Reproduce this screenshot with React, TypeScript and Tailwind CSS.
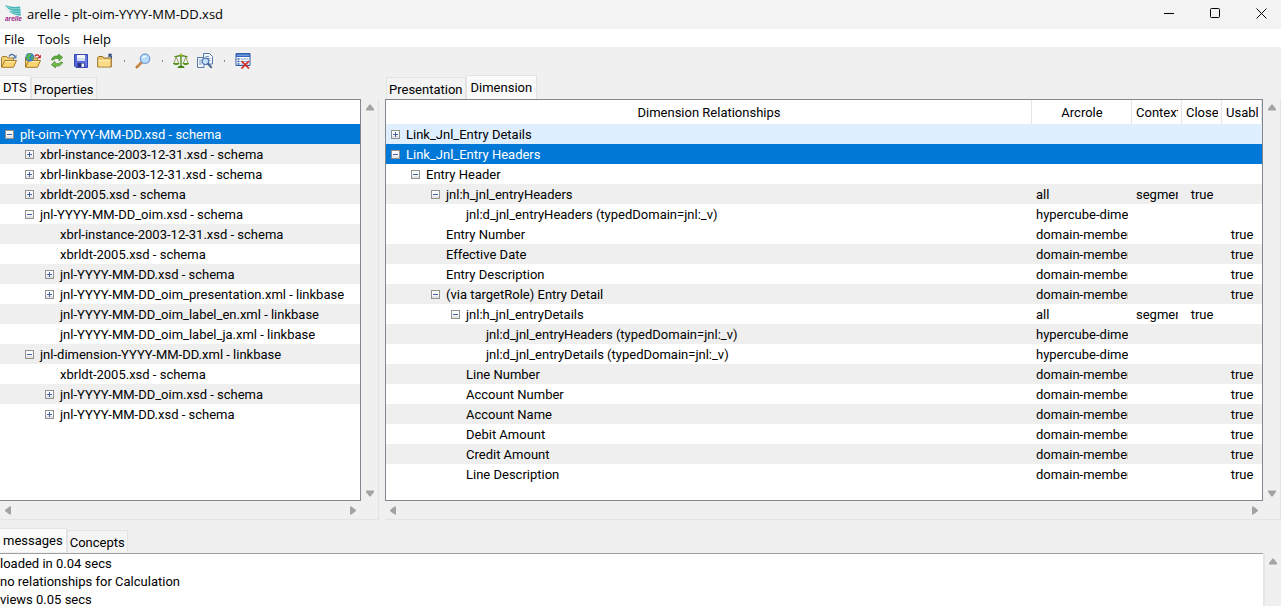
import { useState } from "react";
import type { ReactNode } from "react";

const indent = ["pl-[5px]", "pl-[25px]", "pl-[45px]", "pl-[65px]", "pl-[85px]"];

type Mark = "+" | "-" | "";
type Node = { depth: number; mark: Mark; text: string };
type Relation = Node & {
  tone: string;
  arcrole?: string;
  context?: string;
  closed?: string;
  usable?: string;
};

const dts: Node[] = [
  { depth: 0, mark: "-", text: "plt-oim-YYYY-MM-DD.xsd - schema" },
  { depth: 1, mark: "+", text: "xbrl-instance-2003-12-31.xsd - schema" },
  { depth: 1, mark: "+", text: "xbrl-linkbase-2003-12-31.xsd - schema" },
  { depth: 1, mark: "+", text: "xbrldt-2005.xsd - schema" },
  { depth: 1, mark: "-", text: "jnl-YYYY-MM-DD_oim.xsd - schema" },
  { depth: 2, mark: "", text: "xbrl-instance-2003-12-31.xsd - schema" },
  { depth: 2, mark: "", text: "xbrldt-2005.xsd - schema" },
  { depth: 2, mark: "+", text: "jnl-YYYY-MM-DD.xsd - schema" },
  { depth: 2, mark: "+", text: "jnl-YYYY-MM-DD_oim_presentation.xml - linkbase" },
  { depth: 2, mark: "", text: "jnl-YYYY-MM-DD_oim_label_en.xml - linkbase" },
  { depth: 2, mark: "", text: "jnl-YYYY-MM-DD_oim_label_ja.xml - linkbase" },
  { depth: 1, mark: "-", text: "jnl-dimension-YYYY-MM-DD.xml - linkbase" },
  { depth: 2, mark: "", text: "xbrldt-2005.xsd - schema" },
  { depth: 2, mark: "+", text: "jnl-YYYY-MM-DD_oim.xsd - schema" },
  { depth: 2, mark: "+", text: "jnl-YYYY-MM-DD.xsd - schema" },
];

const white = "bg-white";
const gray = "bg-[#efefef]";
const member = "domain-member";
const hyper = "hypercube-dimension";

const relations: Relation[] = [
  { depth: 0, mark: "+", text: "Link_Jnl_Entry Details", tone: "bg-[#dfefff]" },
  { depth: 0, mark: "-", text: "Link_Jnl_Entry Headers", tone: "bg-[#0078d7] text-white" },
  { depth: 1, mark: "-", text: "Entry Header", tone: white },
  { depth: 2, mark: "-", text: "jnl:h_jnl_entryHeaders", tone: gray, arcrole: "all", context: "segment", closed: "true" },
  { depth: 3, mark: "", text: "jnl:d_jnl_entryHeaders (typedDomain=jnl:_v)", tone: white, arcrole: hyper },
  { depth: 2, mark: "", text: "Entry Number", tone: white, arcrole: member, usable: "true" },
  { depth: 2, mark: "", text: "Effective Date", tone: gray, arcrole: member, usable: "true" },
  { depth: 2, mark: "", text: "Entry Description", tone: white, arcrole: member, usable: "true" },
  { depth: 2, mark: "-", text: "(via targetRole) Entry Detail", tone: gray, arcrole: member, usable: "true" },
  { depth: 3, mark: "-", text: "jnl:h_jnl_entryDetails", tone: white, arcrole: "all", context: "segment", closed: "true" },
  { depth: 4, mark: "", text: "jnl:d_jnl_entryHeaders (typedDomain=jnl:_v)", tone: gray, arcrole: hyper },
  { depth: 4, mark: "", text: "jnl:d_jnl_entryDetails (typedDomain=jnl:_v)", tone: white, arcrole: hyper },
  { depth: 3, mark: "", text: "Line Number", tone: gray, arcrole: member, usable: "true" },
  { depth: 3, mark: "", text: "Account Number", tone: white, arcrole: member, usable: "true" },
  { depth: 3, mark: "", text: "Account Name", tone: gray, arcrole: member, usable: "true" },
  { depth: 3, mark: "", text: "Debit Amount", tone: white, arcrole: member, usable: "true" },
  { depth: 3, mark: "", text: "Credit Amount", tone: gray, arcrole: member, usable: "true" },
  { depth: 3, mark: "", text: "Line Description", tone: white, arcrole: member, usable: "true" },
];

function TreeLabel({ depth, mark, text }: Node) {
  return (
    <div className={`flex h-5 items-center gap-[6px] ${indent[depth]}`}>
      {mark ? (
        <button type="button" aria-label={mark === "+" ? `Expand ${text}` : `Collapse ${text}`} className="size-[9px] shrink-0">
          <svg viewBox="0 0 9 9" className="block size-[9px]" shapeRendering="crispEdges">
            <rect width="9" height="9" fill="#919191" />
            <rect x="1" y="1" width="7" height="7" fill="#fbfbfb" />
            <rect x="1" y="6" width="7" height="2" fill="#e4e4e4" />
            <rect x="2" y="4" width="5" height="1" fill="#3f5fa8" />
            {mark === "+" && <rect x="4" y="2" width="1" height="5" fill="#3f5fa8" />}
          </svg>
        </button>
      ) : (
        <span className="w-[9px] shrink-0" />
      )}
      <span className="pt-[2px] leading-[18px] whitespace-nowrap">{text}</span>
    </div>
  );
}

function ArrowButton({ dir }: { dir: "up" | "down" | "left" | "right" }) {
  const d = {
    up: "M4.5 1.5h1L9 6v1.5H1V6z",
    down: "M1 1.5h8V3L5.5 7.5h-1L1 3z",
    left: "M8 .5v8H6.5L2 5V4l4.5-3.5z",
    right: "M2 .5v8h1.500L8 5V4L3.500 .5z",
  }[dir];
  return (
    <button type="button" aria-label={`Scroll ${dir}`} className="flex size-4 items-center justify-center">
      <svg viewBox="0 0 10 9" className="h-[9px] w-[10px]" fill="#a3a3a3">
        <path d={d} />
      </svg>
    </button>
  );
}

function VScroll() {
  return (
    <div className="row-span-2 flex w-[18px] flex-col items-center justify-between border-r border-[#e3e3e3] bg-[#f0f0f0] pb-[18px]">
      <ArrowButton dir="up" />
      <ArrowButton dir="down" />
    </div>
  );
}

function HScroll() {
  return (
    <div className="flex h-[18px] items-center justify-between">
      <ArrowButton dir="left" />
      <ArrowButton dir="right" />
    </div>
  );
}

function Pane({ children, edge }: { children: ReactNode; edge: string }) {
  return (
    <div className="grid grid-cols-[minmax(0,1fr)_18px] grid-rows-[402px_18px] border-b border-[#e3e3e3]">
      <div className={`overflow-hidden border-y border-r border-[#828790] bg-white ${edge}`}>{children}</div>
      <VScroll />
      <HScroll />
    </div>
  );
}

function Tabs({ names, start, narrow }: { names: string[]; start: string; narrow?: boolean }) {
  const [active, setActive] = useState(start);
  return (
    <div role="tablist" className={`flex h-6 items-end ${narrow ? "" : "pl-px"}`}>
      {names.map((name) => (
        <button
          key={name}
          type="button"
          role="tab"
          aria-selected={name === active}
          onClick={() => setActive(name)}
          className={
            name === active
              ? `h-6 border border-b-0 border-[#e3e3e3] bg-[#fafafa] pt-px ${narrow ? "border-l-0 pr-[3px] pl-[3px]" : "px-[4px]"}`
              : "h-[22px] border border-b-0 border-[#e3e3e3] bg-[#f3f3f3] px-[2px] pt-[2px]"
          }
        >
          {name}
        </button>
      ))}
    </div>
  );
}

const folder = (
  <>
    <path d="M.5 14V4.500l1-1h4l1.500 1.500h5.500v3" fill="#f3d37a" stroke="#a57a2a" />
    <path d="M.8 14.300 3.700 7.500h11.800L12.500 14.300z" fill="#fbd572" stroke="#a87a28" strokeLinejoin="round" />
    <path d="M4.300 8.500h9.700" stroke="#fff0b8" />
  </>
);

function Icon({ children }: { children: ReactNode }) {
  return (
    <svg viewBox="0 0 16 16" className="block size-4" fill="none">
      {children}
    </svg>
  );
}

const icons: Record<string, ReactNode> = {
  "Open file": (
    <Icon>
      {folder}
      <path d="M8 3.500C9.500.8 12 .8 13.800 3.300" stroke="#4c6c99" strokeWidth="1.300" />
      <path d="M15.500 1.500v4h-4z" fill="#5f82b0" />
    </Icon>
  ),
  "Open web": (
    <Icon>
      {folder}
      <circle cx="4.800" cy="4.300" r="4" fill="#3c86d8" stroke="#2a5ea8" strokeWidth=".6" />
      <path d="M1.500 2.500 4.500.6l2.300 1-1.300 2-1.500.7.8 1.700-1 1.500L1.200 5zM6.300 4l2.200-.8v2L6.800 7.200z" fill="#58b947" />
      <path d="M9.800 3.500c1-2 2.700-2.200 4-.6" stroke="#c81e28" strokeWidth="1.300" />
      <path d="M15.800 1.500v3.800H12z" fill="#c81e28" />
    </Icon>
  ),
  Reload: (
    <Icon>
      <path d="M2.300 7C3 3.800 6.500 2.300 9.500 3V1l4.200 3.300L10 8V6C7.500 5 5.500 5.300 4.500 7z" fill="#5faa3c" stroke="#36791f" strokeWidth=".5" />
      <path d="M13.700 9c-.7 3.200-4.200 4.700-7.200 4v2L2.300 11.700 6 8v2c2.500 1 4.500.7 5.500-1z" fill="#6eb848" stroke="#36791f" strokeWidth=".5" />
    </Icon>
  ),
  Save: (
    <Icon>
      <path d="M1.500 1.500h13v13H3l-1.500-1.500z" fill="#5568dc" stroke="#3a48b4" />
      <path d="M4 2h8v6H4z" fill="#f4f6fc" />
      <path d="M4 5h8v3H4z" fill="#d3ddf2" />
      <path d="M4.500 10h7v4h-7z" fill="#2a3280" />
      <path d="M8.500 10.500h2.500V14H8.500z" fill="#f4f4f4" />
      <path d="M13 3v10" stroke="#7d8ae4" />
    </Icon>
  ),
  "Close file": (
    <Icon>
      <path d="M.7 14V4.500l1-1h4L7 5h7.300v9z" fill="#e9c468" stroke="#96702a" />
      <path d="M1.500 7h11.500v6.500H1.500z" fill="#fbdc86" />
      <path d="M1.500 7.300H13" stroke="#fff2c0" />
      <path d="M11.500.8h4l-1.300 1.300c1 1.400 1.200 2.900.6 4.400-.2-1.500-.8-2.500-1.900-3L11.500 4.800z" fill="#2f4c7a" />
    </Icon>
  ),
  Find: (
    <Icon>
      <path d="m6.600 9.400-4.800 4.800" stroke="#b56f2c" strokeWidth="2.600" strokeLinecap="round" />
      <path d="m6 9.700-4.200 4.200" stroke="#f0b070" strokeWidth=".9" />
      <circle cx="10" cy="5.700" r="4.700" fill="#b9dcfa" stroke="#7fa3d6" strokeWidth="1.400" />
      <path d="M7 5.200C7.500 3 9.500 2.300 11.500 3 10 4.500 8.500 4.800 7 5.200z" fill="#f2faff" />
    </Icon>
  ),
  Validate: (
    <Icon>
      <path d="M8 1v12M1.500 3.500c2 .8 3.500-1 6.500-1s4.500 1.800 6.500 1" stroke="#4f8a1b" strokeWidth="1.400" />
      <path d="M3.200 4 .8 10.500M3.200 4l2.600 6.500M12.800 4l-2.600 6.500M12.800 4l2.400 6.500" stroke="#7a8a3a" strokeWidth=".8" />
      <path d="M0 10h6.500c-.4 2.800-6 2.800-6.500 0zM9.500 10H16c-.4 2.800-6 2.800-6.500 0z" fill="#4f961b" />
      <path d="M4.500 15c0-1.800 2-2.200 3.500-2.200s3.500.4 3.500 2.200z" fill="#3f8414" />
      <circle cx="8" cy="1.800" r="1.300" fill="#b5b92e" />
    </Icon>
  ),
  Compare: (
    <Icon>
      <path d="M6.500.5h6l3 3v7.500h-9z" fill="#f3f7fd" stroke="#5878a8" />
      <path d="M8.500 3.500h3.500M8.500 5.500h5M8.500 7.500h5" stroke="#7f9cc8" />
      <path d="M.5 4.500H7V14.500H.5z" fill="#f3f7fd" stroke="#5878a8" />
      <path d="M2 7h3M2 9h3M2 11h3" stroke="#7f9cc8" />
      <circle cx="8.500" cy="8.300" r="3.200" fill="#c4e2fa" stroke="#4f78b0" strokeWidth="1.200" />
      <path d="m11 10.800 3.200 3.400" stroke="#4a6894" strokeWidth="2" strokeLinecap="round" />
    </Icon>
  ),
  "View log": (
    <Icon>
      <path d="M1 .5h14v12H1z" fill="#fff" stroke="#2f5aa8" />
      <path d="M1 .5h14V4H1z" fill="#3565bc" />
      <path d="M2 2.200h12" stroke="#8db0ea" />
      <path d="M2.500 6h2M2.500 8.500h2M2.500 11h2" stroke="#2858a8" strokeWidth="1.500" />
      <path d="M5.500 6h8M5.500 8.500h8M5.500 11h8" stroke="#7fa0d4" />
      <path d="m6.500 8 7.500 7.500M14 8l-7.500 7.500" stroke="#d8281e" strokeWidth="1.700" />
    </Icon>
  ),
};

const toolbar = ["Open file", "Open web", "Reload", "Save", "Close file", "|", "Find", "|", "Validate", "Compare", "|", "View log"];

function Cell({ children, center }: { children?: ReactNode; center?: boolean }) {
  return (
    <td className="px-1 py-0">
      <div className={`overflow-hidden pt-[2px] leading-[18px] whitespace-nowrap ${center ? "text-center" : ""}`}>{children}</div>
    </td>
  );
}

export default function App() {
  return (
    <div className="flex h-screen flex-col overflow-hidden bg-[#f0f0f0] font-['Roboto','Open_Sans',sans-serif] text-[13px] leading-5 text-black">
      <header className="flex h-[29px] shrink-0 items-center justify-between bg-[#f3f3f3]">
        <div className="flex items-center gap-[5px] pb-[2px] pl-[5px]">
          <svg viewBox="0 0 17 17" className="size-[17px]">
            <path d="M0 0c5 2 10 2.500 15 1.500L16 10.500C11 10.500 6 9 4 6c2 .5 3 .5 4 .3C4 5 1.500 3 0 0z" fill="#3fb3b5" />
            <path d="M1 1.500c5 2.300 9 2.800 14 2M3.500 4.500c4 1.500 7.500 2 12 1.800M6 7.500c3 1 6 1.300 10 1" stroke="#b5e4e2" strokeWidth=".7" fill="none" />
            <text x="0" y="16" fontSize="6.500" fontWeight="700" fontStyle="italic" fill="#a3248f" fontFamily="Liberation Sans, sans-serif">arelle</text>
          </svg>
          <h1 className="font-['Open_Sans','Noto_Sans',sans-serif] text-[13px]">arelle - plt-oim-YYYY-MM-DD.xsd</h1>
        </div>
        <div className="flex items-center gap-[6px] pb-[2px]">
          <button type="button" aria-label="Minimize" className="flex h-6 w-10 items-center justify-center">
            <svg viewBox="0 0 11 11" className="size-[11px]" stroke="#000" fill="none"><path d="M0 5.500h10" /></svg>
          </button>
          <button type="button" aria-label="Maximize" className="flex h-6 w-10 items-center justify-center">
            <svg viewBox="0 0 11 11" className="size-[11px]" stroke="#000" fill="none"><rect x=".5" y=".5" width="9" height="9" rx="1" /></svg>
          </button>
          <button type="button" aria-label="Close" className="flex h-6 w-10 items-center justify-center">
            <svg viewBox="0 0 11 11" className="size-[11px]" stroke="#000" fill="none"><path d="m.5.5 10 10M10.500.5l-10 10" /></svg>
          </button>
        </div>
      </header>

      <nav className="flex h-[18px] shrink-0 items-center gap-[13px] bg-white pt-[2px] pl-1 font-['Open_Sans','Noto_Sans',sans-serif]">
        <button type="button">File</button>
        <button type="button">Tools</button>
        <button type="button">Help</button>
      </nav>

      <div role="toolbar" className="flex h-7 shrink-0 items-center gap-2 pl-px">
        {toolbar.map((item, i) =>
          item === "|" ? (
            <span key={i} className="flex w-[6px] justify-center">
              <span className="h-[2px] w-px bg-[#8c8c8c]" />
            </span>
          ) : (
            <button key={i} type="button" aria-label={item} title={item}>
              {icons[item]}
            </button>
          ),
        )}
      </div>

      <main className="flex shrink-0 gap-[6px]">
        <section className="w-[379px] shrink-0">
          <Tabs names={["DTS", "Properties"]} start="DTS" narrow />
          <Pane edge="">
            <div className="h-6" />
            <ul>
              {dts.map((node, i) => (
                <li key={i} className={i === 0 ? "bg-[#0078d7] text-white" : i % 2 ? gray : white}>
                  <TreeLabel {...node} />
                </li>
              ))}
            </ul>
          </Pane>
        </section>

        <section className="min-w-0 flex-1">
          <Tabs names={["Presentation", "Dimension"]} start="Dimension" />
          <Pane edge="border-l">
            <table className="w-full table-fixed border-separate border-spacing-0">
              <colgroup>
                <col />
                <col className="w-[100px]" />
                <col className="w-[50px]" />
                <col className="w-[40px]" />
                <col className="w-[40px]" />
              </colgroup>
              <thead>
                <tr className="h-6">
                  {["Dimension Relationships", "Arcrole", "Context", "Closed", "Usable"].map((name, i) => (
                    <th key={name} scope="col" className="border-r border-[#e5e5e5] py-0 pr-[3px] pl-1 font-normal">
                      <div className={`overflow-hidden pt-[2px] whitespace-nowrap ${i < 2 ? "text-center" : "text-left"}`}>{name}</div>
                    </th>
                  ))}
                </tr>
              </thead>
              <tbody>
                {relations.map((row, i) => (
                  <tr key={i} className={`h-5 ${row.tone}`}>
                    <td className="p-0">
                      <TreeLabel depth={row.depth} mark={row.mark} text={row.text} />
                    </td>
                    <Cell>{row.arcrole}</Cell>
                    <Cell>{row.context}</Cell>
                    <Cell center>{row.closed}</Cell>
                    <Cell center>{row.usable}</Cell>
                  </tr>
                ))}
              </tbody>
            </table>
          </Pane>
        </section>
      </main>

      <section className="flex min-h-0 flex-1 flex-col pt-2">
        <Tabs names={["messages", "Concepts"]} start="messages" narrow />
        <div className="flex min-h-0 flex-1 pt-px">
          <div role="log" className="min-w-0 flex-1 overflow-hidden border-t border-[#a0a0a0] bg-white pt-px leading-[18px]">
            <p>loaded in 0.04 secs</p>
            <p>no relationships for Calculation</p>
            <p>views 0.05 secs</p>
          </div>
          <div className="flex w-[18px] justify-center border-l-2 border-[#e6e6e6]">
            <ArrowButton dir="up" />
          </div>
        </div>
      </section>
    </div>
  );
}
